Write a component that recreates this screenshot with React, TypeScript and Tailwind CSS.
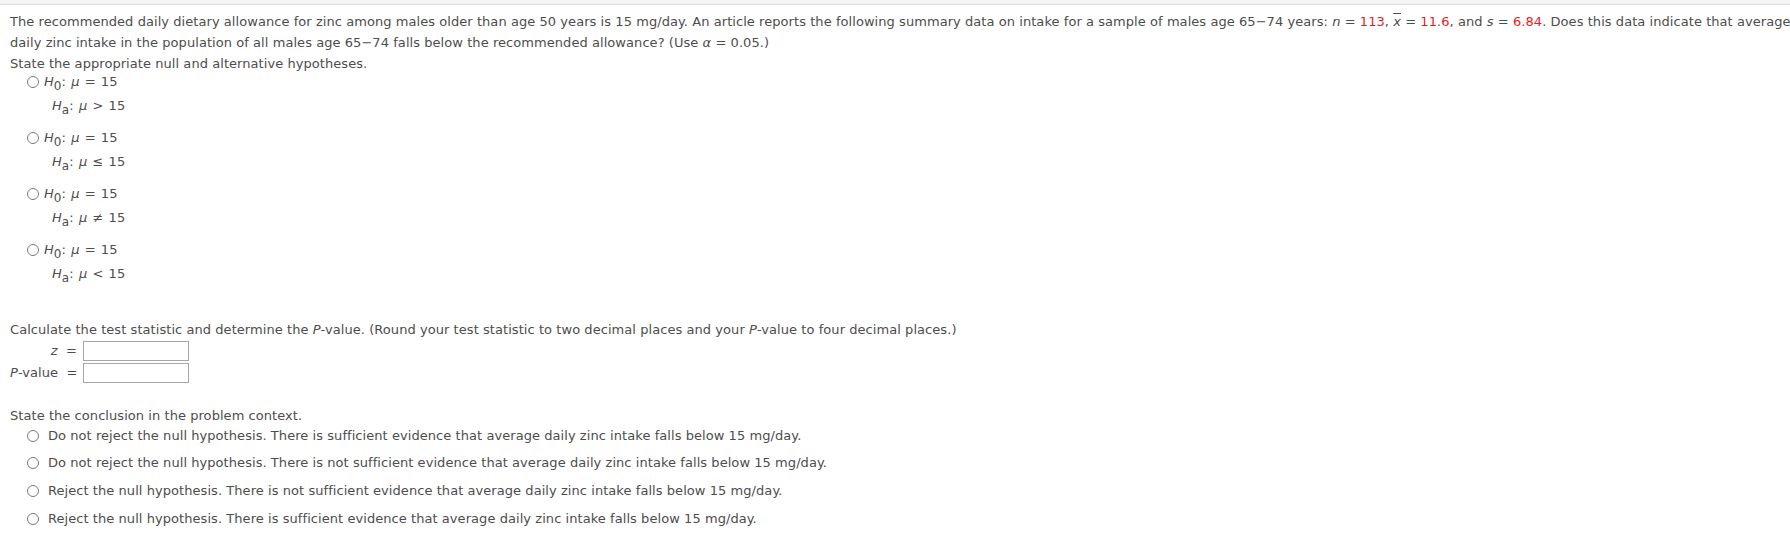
const hyps = [">", "≤", "≠", "<"];

const conclusions = [
  "Do not reject the null hypothesis. There is sufficient evidence that average daily zinc intake falls below 15 mg/day.",
  "Do not reject the null hypothesis. There is not sufficient evidence that average daily zinc intake falls below 15 mg/day.",
  "Reject the null hypothesis. There is not sufficient evidence that average daily zinc intake falls below 15 mg/day.",
  "Reject the null hypothesis. There is sufficient evidence that average daily zinc intake falls below 15 mg/day.",
];

function Radio() {
  return (
    <span className="inline-block w-[12px] h-[12px] rounded-full border border-[#7a7a7a] bg-white shrink-0" />
  );
}

function Sub({ children }: { children: string }) {
  return <span className="relative top-[4px] text-[12px]">{children}</span>;
}

function Red({ children }: { children: string }) {
  return <span className="text-[#e41e1e]">{children}</span>;
}

export default function App() {
  return (
    <div
      className="min-h-screen bg-white text-[13px] tracking-[0.06px] text-[#4d4d4d]"
      style={{ fontFamily: '"DejaVu Sans", Verdana, sans-serif' }}
    >
      <div className="h-[5px] bg-[#f4f4f4] border-b border-[#dcdcdc]" />

      <div className="px-[10px] pt-[6px]">
        <div className="leading-[21px]">
          <div className="whitespace-nowrap">
            The recommended daily dietary allowance for zinc among males older than age 50 years is 15 mg/day. An
            article reports the following summary data on intake for a sample of males age 65−74 years:{" "}
            <i>n</i> = <Red>113</Red>, <i className="overline">x</i> = <Red>11.6</Red>, and <i>s</i> ={" "}
            <Red>6.84</Red>. Does this data indicate that average
          </div>
          <div className="whitespace-nowrap">
            daily zinc intake in the population of all males age 65−74 falls below the recommended allowance? (Use{" "}
            <i>α</i> = 0.05.)
          </div>
          <div>State the appropriate null and alternative hypotheses.</div>
        </div>

        <div className="pl-[17px]">
          {hyps.map((op) => (
            <div key={op} className="pb-[16px]">
              <div className="flex items-center h-[16px] gap-[5px]">
                <Radio />
                <span className="whitespace-nowrap [word-spacing:1px]">
                  <i>H</i>
                  <Sub>0</Sub>: <i>μ</i> = 15
                </span>
              </div>
              <div className="flex items-center h-[16px] mt-[8px] pl-[25px] whitespace-nowrap [word-spacing:1px]">
                <span>
                  <i>H</i>
                  <Sub>a</Sub>: <i>μ</i> {op} 15
                </span>
              </div>
            </div>
          ))}
        </div>

        <div className="mt-[21px] leading-[21px]">
          Calculate the test statistic and determine the <i>P</i>-value. (Round your test statistic to two decimal
          places and your <i>P</i>-value to four decimal places.)
        </div>

        <div className="flex flex-col gap-[2px] mt-[1px]">
          <div className="flex items-center h-[20px]">
            <span className="w-[67px] text-right whitespace-pre">
              <i>z</i>{"  "}=
            </span>
            <div className="ml-[6px] w-[106px] h-[20px] border border-[#a6a6a6] bg-white" />
          </div>
          <div className="flex items-center h-[20px]">
            <span className="w-[67px] text-right whitespace-pre">
              <i>P</i>-value{"  "}=
            </span>
            <div className="ml-[6px] w-[106px] h-[20px] border border-[#a6a6a6] bg-white" />
          </div>
        </div>

        <div className="mt-[22px] leading-[21px]">State the conclusion in the problem context.</div>

        <div className="flex flex-col gap-[11.7px] pl-[17px] pt-[1.5px]">
          {conclusions.map((c) => (
            <div key={c} className="flex items-center h-[16px] gap-[9px]">
              <Radio />
              <span className="whitespace-nowrap">{c}</span>
            </div>
          ))}
        </div>
      </div>
    </div>
  );
}
